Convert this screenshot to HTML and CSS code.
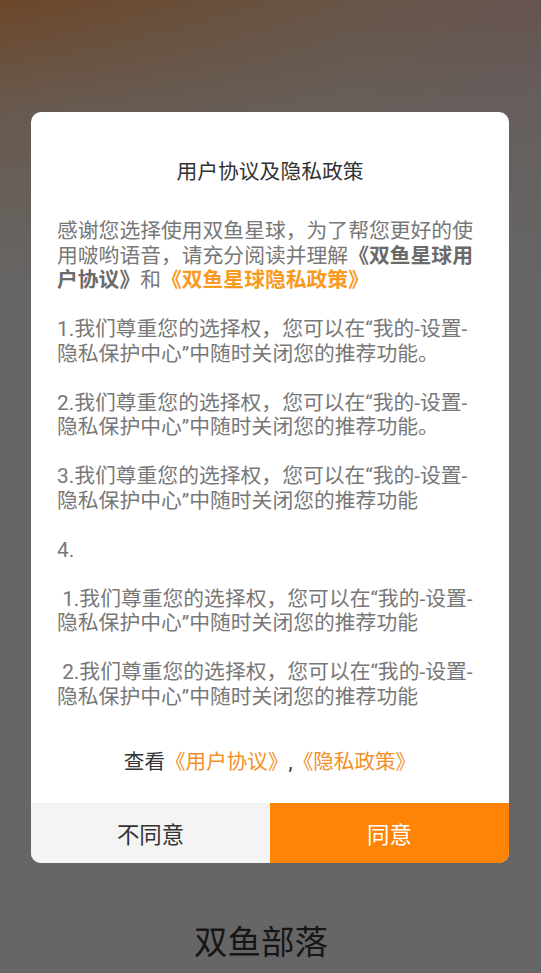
FILE: index.html
```html
<!DOCTYPE html>
<html lang="zh-CN">
<head>
<meta charset="utf-8">
<title>用户协议及隐私政策</title>
<link rel="stylesheet" href="styles.css">
</head>
<body>
<div class="screen">
  <div class="dialog">
    <div class="dialog-body">
      <h1 class="title">用户协议及隐私政策</h1>
      <div class="content">
        <p>感谢您选择使用双鱼星球，为了帮您更好的使<br>用啵哟语音，请充分阅读并理解<b class="strong">《双鱼星球用<br>户协议》</b>和<b class="strong-link">《双鱼星球隐私政策》</b></p>
        <p>1.我们尊重您的选择权，您可以在“我的-设置-<br>隐私保护中心”中随时关闭您的推荐功能。</p>
        <p>2.我们尊重您的选择权，您可以在“我的-设置-<br>隐私保护中心”中随时关闭您的推荐功能。</p>
        <p>3.我们尊重您的选择权，您可以在“我的-设置-<br>隐私保护中心”中随时关闭您的推荐功能</p>
        <p>4.</p>
        <p class="pre"> 1.我们尊重您的选择权，您可以在“我的-设置-<br>隐私保护中心”中随时关闭您的推荐功能</p>
        <p class="pre"> 2.我们尊重您的选择权，您可以在“我的-设置-<br>隐私保护中心”中随时关闭您的推荐功能</p>
      </div>
      <div class="links">查看<span class="link">《用户协议》</span>,<span class="link">《隐私政策》</span></div>
    </div>
    <div class="actions">
      <button class="btn btn-disagree">不同意</button>
      <button class="btn btn-agree">同意</button>
    </div>
  </div>
  <div class="brand">双鱼部落</div>
</div>
</body>
</html>
```

FILE: styles.css
```css
html, body {
  margin: 0;
  padding: 0;
}

body {
  width: 541px;
  height: 973px;
  overflow: hidden;
  font-family: Roboto, "Noto Sans CJK SC", sans-serif;
  background-color: #666666;
  background-image:
    linear-gradient(180deg, rgba(102,102,102,0) 0px, rgba(102,102,102,0.6) 110px, #666666 300px),
    linear-gradient(100deg, #6c4629 0%, #675547 50%, #655259 100%);
  background-repeat: no-repeat;
  background-size: 541px 973px;
}

.screen {
  display: flex;
  flex-direction: column;
  align-items: flex-start;
  padding-top: 112px;
}

.dialog {
  width: 478px;
  margin-left: 31px;
  background: #ffffff;
  border-radius: 10px;
  overflow: hidden;
  display: flex;
  flex-direction: column;
}

.dialog-body {
  padding: 48px 26px 0 26px;
}

.title {
  margin: 0;
  font-size: 20.8px;
  line-height: 25px;
  font-weight: normal;
  color: #333333;
  text-align: center;
}

.content {
  margin-top: 34px;
  font-size: 20.8px;
  line-height: 24.5px;
  color: #787878;
}

.content p {
  margin: 0 0 24.5px 0;
  white-space: nowrap;
}

.content p:last-child {
  margin-bottom: 0;
}

.content p.pre {
  white-space: pre;
}

.strong {
  font-weight: bold;
  color: #6a6a6a;
}

.strong-link {
  font-weight: bold;
  color: #f99a1f;
}

.links {
  margin-top: 41px;
  margin-bottom: 28px;
  text-align: center;
  font-size: 20.6px;
  line-height: 25px;
  color: #333333;
}

.link {
  color: #f39028;
}

.actions {
  display: grid;
  grid-template-columns: 1fr 1fr;
  height: 60px;
}

.btn {
  border: none;
  margin: 0;
  padding: 0;
  font-family: Roboto, "Noto Sans CJK SC", sans-serif;
  font-size: 22.4px;
}

.btn-disagree {
  background: #f4f4f4;
  color: #333333;
}

.btn-agree {
  background: #ff8304;
  color: #ffffff;
}

.brand {
  align-self: center;
  margin-top: 60px;
  padding-right: 19px;
  font-size: 33.5px;
  line-height: 40px;
  color: #161616;
}
```
